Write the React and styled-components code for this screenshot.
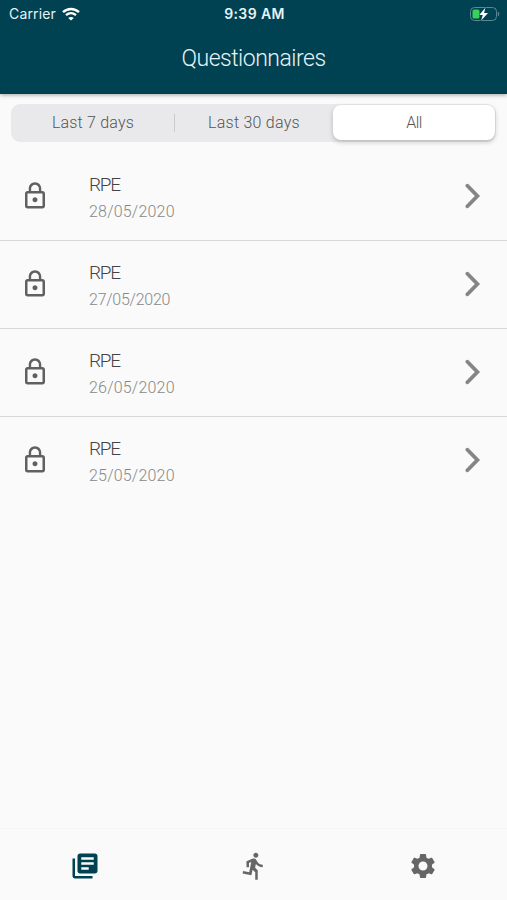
import React, { useState } from "react";
import styled, { createGlobalStyle } from "styled-components";
import {
  MdDirectionsRun,
  MdLibraryBooks,
  MdLockOutline,
  MdSettings,
} from "react-icons/md";

const GlobalStyle = createGlobalStyle`
  * {
    box-sizing: border-box;
  }
  body {
    margin: 0;
    background: #fafafa;
    font-family: Roboto, "Liberation Sans", sans-serif;
  }
  button {
    border: 0;
    padding: 0;
    background: none;
    font-family: inherit;
  }
`;

const Screen = styled.div`
  display: flex;
  flex-direction: column;
  height: 900px;
  overflow: hidden;
`;

const Header = styled.header`
  height: 94px;
  flex-shrink: 0;
  background: #004152;
  color: #e6f3f6;
  box-shadow: 0 1px 4px rgba(0, 0, 0, 0.35);
`;

const StatusBar = styled.div`
  display: grid;
  grid-template-columns: 1fr auto 1fr;
  align-items: center;
  height: 27px;
  padding: 0 7px 0 9px;
  font-family: Inter, sans-serif;
  font-size: 14px;
`;

const Carrier = styled.div`
  display: flex;
  align-items: center;
  gap: 6px;
  letter-spacing: 0.15px;
`;

const Clock = styled.div`
  font-weight: 600;
  letter-spacing: 0.4px;
`;

const BatteryIcon = styled.svg`
  justify-self: end;
`;

const Title = styled.h1`
  margin: 0;
  text-align: center;
  font-size: 23px;
  font-weight: 300;
  line-height: 63px;
  letter-spacing: -0.5px;
`;

const Segments = styled.div`
  display: grid;
  grid-template-columns: 162px 1px 158px 162px;
  flex-shrink: 0;
  height: 38px;
  margin: 10px 11px 11px;
  padding: 1px;
  border-radius: 9px;
  background: #e9e9eb;
`;

const Segment = styled.button`
  height: 35px;
  padding-bottom: 1px;
  border-radius: 8px;
  background: ${(props) => (props.$active ? "#fff" : "none")};
  box-shadow: ${(props) =>
    props.$active ? "0 2px 5px rgba(0, 0, 0, 0.22)" : "none"};
  color: #555;
  font-size: 16px;
  font-weight: 300;
  letter-spacing: ${(props) => props.$spacing}px;
`;

const Divider = styled.span`
  width: 1px;
  height: 18px;
  margin-top: 9px;
  background: #cbcbce;
`;

const List = styled.ul`
  flex: 1;
  margin: 0;
  padding: 0;
  list-style: none;
`;

const Item = styled.li`
  display: flex;
  align-items: center;
  height: 88px;
  padding: 0 26px 2px 20px;
  border-bottom: 1px solid #d6d6d6;
  color: #606060;

  &:last-child {
    border-bottom-color: transparent;
  }
`;

const ItemText = styled.div`
  flex: 1;
  margin-left: 39px;
  padding-top: 6px;
`;

const ItemTitle = styled.div`
  color: #444;
  font-size: 19px;
  font-weight: 300;
  line-height: 26px;
  letter-spacing: -1.2px;
`;

const ItemDate = styled.div`
  color: #888;
  font-size: 16px;
  font-weight: 300;
  line-height: 27px;
  letter-spacing: ${(props) => props.$spacing}px;
`;

const TabBar = styled.nav`
  display: flex;
  flex-shrink: 0;
  height: 72px;
  padding-top: 3px;
  border-top: 1px solid #f6f6f6;
`;

const Tab = styled.button`
  display: flex;
  flex: 1;
  align-items: center;
  justify-content: center;
  color: ${(props) => (props.$active ? "#004152" : "#666")};
`;

const segments = [
  { label: "Last 7 days", spacing: 0.2 },
  { label: "Last 30 days", spacing: 0.25 },
  { label: "All", spacing: -0.5 },
];

const questionnaires = [
  { name: "RPE", date: "28/05/2020", spacing: 0.2 },
  { name: "RPE", date: "27/05/2020", spacing: -0.25 },
  { name: "RPE", date: "26/05/2020", spacing: 0.2 },
  { name: "RPE", date: "25/05/2020", spacing: 0.2 },
];

const tabs = [
  { name: "questionnaires", Icon: MdLibraryBooks },
  { name: "activity", Icon: MdDirectionsRun },
  { name: "settings", Icon: MdSettings },
];

const Wifi = () => (
  <svg width="18" height="14" viewBox="0 0 18 14" fill="none" stroke="#fff">
    <path d="M1 5.1C5.6.8 12.4.8 17 5.1" strokeWidth="2.5" />
    <path d="M4 8.2c3-2.6 7-2.6 10 0" strokeWidth="2.3" />
    <path d="M9 13.6 6.2 10.9c1.7-1.3 3.9-1.3 5.6 0Z" fill="#fff" stroke="none" />
  </svg>
);

const Battery = () => (
  <BatteryIcon width="31" height="16" viewBox="0 0 31 16">
    <rect x="1.5" y="1.5" width="26" height="13" rx="4" fill="none" stroke="#5d8794" />
    <path d="M28.8 5.5c2 .9 2 4.1 0 5Z" fill="#5d8794" />
    <rect x="3.5" y="3.5" width="7" height="9" rx="1.5" fill="#35d158" />
    <path
      d="M16.4 1.7 10.2 9h3.6l-1.7 5.4L19 7h-3.9Z"
      fill="#fff"
      stroke="#004152"
      strokeWidth="1"
      paintOrder="stroke"
    />
  </BatteryIcon>
);

const Chevron = () => (
  <svg width="16" height="26" viewBox="0 0 16 26" fill="none">
    <path
      d="M2.4 2.7 12.4 13 2.4 23.3"
      stroke="#858585"
      strokeWidth="3.8"
      strokeLinecap="round"
    />
  </svg>
);

const App = () => {
  const [range, setRange] = useState("All");
  const [tab, setTab] = useState("questionnaires");

  return (
    <Screen>
      <GlobalStyle />
      <Header>
        <StatusBar>
          <Carrier>
            Carrier
            <Wifi />
          </Carrier>
          <Clock>9:39 AM</Clock>
          <Battery />
        </StatusBar>
        <Title>Questionnaires</Title>
      </Header>
      <Segments>
        {segments.map(({ label, spacing }, index) => (
          <React.Fragment key={label}>
            {index === 1 && <Divider />}
            <Segment
              $active={label === range}
              $spacing={spacing}
              onClick={() => setRange(label)}
            >
              {label}
            </Segment>
          </React.Fragment>
        ))}
      </Segments>
      <List>
        {questionnaires.map(({ name, date, spacing }) => (
          <Item key={date}>
            <MdLockOutline size={30} />
            <ItemText>
              <ItemTitle>{name}</ItemTitle>
              <ItemDate $spacing={spacing}>{date}</ItemDate>
            </ItemText>
            <Chevron />
          </Item>
        ))}
      </List>
      <TabBar>
        {tabs.map(({ name, Icon }) => (
          <Tab
            key={name}
            aria-label={name}
            $active={name === tab}
            onClick={() => setTab(name)}
          >
            <Icon size={30} />
          </Tab>
        ))}
      </TabBar>
    </Screen>
  );
};

export default App;
